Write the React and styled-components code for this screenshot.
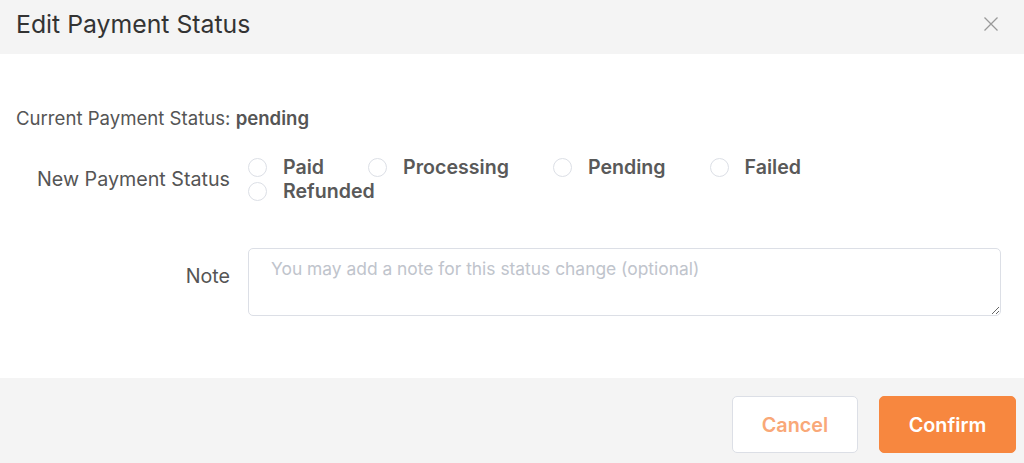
import React, { useState } from "react";
import styled, { createGlobalStyle } from "styled-components";

const GlobalStyle = createGlobalStyle`
  html, body {
    margin: 0;
    padding: 0;
    background: #ffffff;
  }
  body {
    font-family: Inter, "Noto Sans", "Liberation Sans", sans-serif;
    -webkit-font-smoothing: antialiased;
  }
  * {
    box-sizing: border-box;
  }
`;

const Modal = styled.div`
  width: 1024px;
  height: 463px;
  display: flex;
  flex-direction: column;
  background: #ffffff;
  overflow: hidden;
`;

const Header = styled.div`
  height: 54px;
  flex-shrink: 0;
  background: #f4f4f4;
  display: flex;
  align-items: center;
  justify-content: space-between;
  padding: 0 24px 7px 16px;
`;

const Title = styled.h2`
  margin: 0;
  font-size: 24.8px;
  font-weight: 400;
  color: #333333;
`;

const CloseButton = styled.button`
  border: none;
  background: transparent;
  padding: 0;
  width: 18px;
  height: 18px;
  display: flex;
  align-items: center;
  justify-content: center;
  cursor: pointer;
  margin-top: 1px;
`;

const Body = styled.div`
  flex: 1;
  padding: 52px 23px 0 16px;
  display: flex;
  flex-direction: column;
`;

const Current = styled.div`
  font-size: 18.6px;
  line-height: 24px;
  color: #555555;
`;

const Strong = styled.strong`
  font-weight: 600;
`;

const FormRow = styled.div`
  display: flex;
  align-items: ${(props) => (props.top ? "flex-start" : "center")};
  margin-top: ${(props) => props.gap}px;
`;

const Label = styled.label`
  width: 232px;
  flex-shrink: 0;
  text-align: right;
  padding-right: 18px;
  font-size: 19.7px;
  line-height: 24px;
  color: #555555;
  padding-top: ${(props) => props.offset || 0}px;
`;

const RadioGroup = styled.div`
  flex: 1;
  display: flex;
  flex-wrap: wrap;
`;

const RadioItem = styled.label`
  display: flex;
  align-items: center;
  margin-right: 44px;
  height: 24px;
  cursor: pointer;
`;

const Circle = styled.span`
  width: 19px;
  height: 19px;
  border-radius: 50%;
  border: 1px solid #dcdfe6;
  background: #ffffff;
  margin-right: 16px;
  flex-shrink: 0;
  display: flex;
  align-items: center;
  justify-content: center;

  &::after {
    content: "";
    width: 7px;
    height: 7px;
    border-radius: 50%;
    background: ${(props) => (props.checked ? "#f7873f" : "transparent")};
  }
`;

const RadioText = styled.span`
  font-size: 19.6px;
  font-weight: 600;
  color: #595959;
`;

const NoteArea = styled.textarea`
  flex: 1;
  height: 68px;
  border: 1px solid #dcdfe6;
  border-radius: 5px;
  padding: 9px 22px;
  font-family: inherit;
  font-size: 17.4px;
  line-height: 22px;
  color: #555555;
  resize: both;
  outline: none;

  &::placeholder {
    color: #c0c4cc;
  }
`;

const Footer = styled.div`
  height: 85px;
  flex-shrink: 0;
  background: #f4f4f4;
  display: flex;
  justify-content: flex-end;
  align-items: flex-start;
  gap: 21px;
  padding: 18px 8px 0 0;
`;

const Button = styled.button`
  height: 57px;
  width: ${(props) => props.width}px;
  border-radius: 5px;
  font-family: inherit;
  font-size: 19.8px;
  font-weight: 600;
  cursor: pointer;
  border: 1px solid ${(props) => (props.primary ? "#f7873f" : "#dcdfe6")};
  background: ${(props) => (props.primary ? "#f7873f" : "#ffffff")};
  color: ${(props) => (props.primary ? "#ffffff" : "#f9a878")};
`;

const options = ["Paid", "Processing", "Pending", "Failed", "Refunded"];

function CloseIcon() {
  return (
    <svg width="16" height="16" viewBox="0 0 16 16">
      <path d="M1.5 1.5 L14.5 14.5 M14.5 1.5 L1.5 14.5" stroke="#999999" strokeWidth="1.3" fill="none" />
    </svg>
  );
}

export default function App() {
  const [status, setStatus] = useState(null);

  return (
    <>
      <GlobalStyle />
      <Modal>
        <Header>
          <Title>Edit Payment Status</Title>
          <CloseButton aria-label="Close">
            <CloseIcon />
          </CloseButton>
        </Header>
        <Body>
          <Current>
            Current Payment Status: <Strong>pending</Strong>
          </Current>
          <FormRow gap={25}>
            <Label>New Payment Status</Label>
            <RadioGroup>
              {options.map((opt) => (
                <RadioItem key={opt} onClick={() => setStatus(opt)}>
                  <Circle checked={status === opt} />
                  <RadioText>{opt}</RadioText>
                </RadioItem>
              ))}
            </RadioGroup>
          </FormRow>
          <FormRow gap={45} top>
            <Label offset={16}>Note</Label>
            <NoteArea placeholder="You may add a note for this status change (optional)" />
          </FormRow>
        </Body>
        <Footer>
          <Button width={126}>Cancel</Button>
          <Button primary width={137}>Confirm</Button>
        </Footer>
      </Modal>
    </>
  );
}
